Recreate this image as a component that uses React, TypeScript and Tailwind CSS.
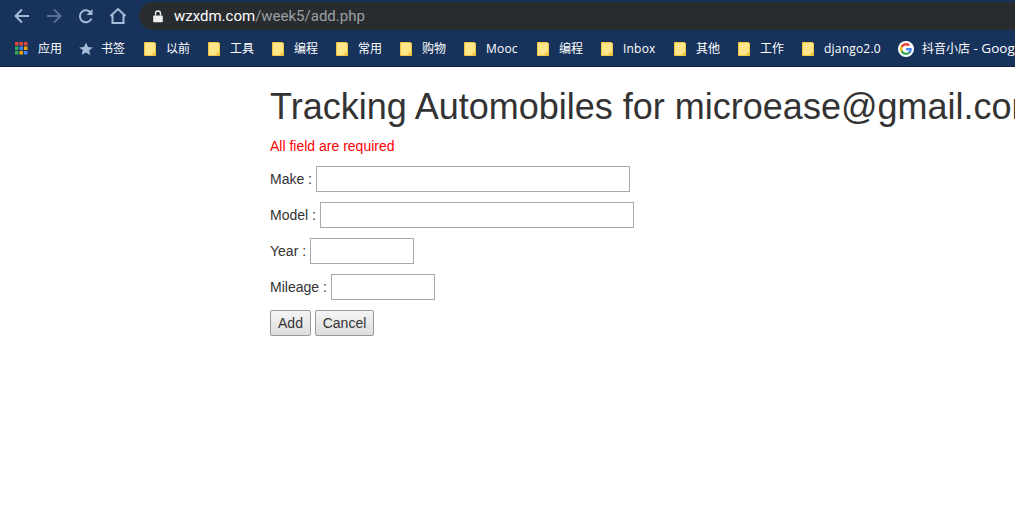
const folders = [
  ["以前", 64], ["工具", 64], ["编程", 64], ["常用", 64], ["购物", 64], ["Mooc", 73], ["编程", 64], ["Inbox", 73], ["其他", 64], ["工作", 64], ["django2.0", 96],
] as const;

const gridColors = ["#e0483e", "#e0483e", "#e0483e", "#34a853", "#4285f4", "#f4a400", "#34a853", "#f4a400", "#4285f4"];

function Folder() {
  return (
    <svg width="12" height="14" viewBox="0 0 12 14" className="shrink-0 ml-[1px]">
      <path d="M.5.5h10l1 1v12H.5z" fill="#ffe68a" stroke="#f2c63c" strokeWidth="1" />
      <path d="M8.500 13.500v-3h3v3z" fill="#f2c63c" />
    </svg>
  );
}

function Field({ label, width }: { label: string; width: string }) {
  return (
    <div className="flex items-center h-[26px] mb-[10px]">
      <span className="mr-1">{label}</span>
      <input className={`${width} h-[26px] border border-[#a9a9a9] bg-white`} />
    </div>
  );
}

export default function App() {
  return (
    <div className="w-[1015px] h-[529px] overflow-hidden bg-white font-['Liberation_Sans',sans-serif]">
      <div className="h-[32px] bg-[#17335c] flex items-center">
        <div className="w-[140px] pl-[13px] flex items-center gap-[14px] shrink-0">
          <svg width="18" height="18" viewBox="0 0 18 18" fill="none" stroke="#a6bbd8" strokeWidth="2"><path d="M16 9H3M9 2.500 2.500 9 9 15.500" /></svg>
          <svg width="18" height="18" viewBox="0 0 18 18" fill="none" stroke="#566f95" strokeWidth="2"><path d="M2 9h13M9 2.500 15.500 9 9 15.500" /></svg>
          <svg width="18" height="18" viewBox="0 0 18 18" fill="none" stroke="#a6bbd8" strokeWidth="2"><path d="M14.500 11.500a6 6 0 1 1-.6-5.500" /><path d="M15.500 2v6h-6z" fill="#a6bbd8" stroke="none" /></svg>
          <svg width="18" height="18" viewBox="0 0 18 18" fill="none" stroke="#a6bbd8" strokeWidth="2"><path d="M1.500 9 9 2l7.500 7M3.500 7.500V16h11V7.500" /></svg>
        </div>
        <div className="flex-1 h-[28px] -ml-[1px] bg-[#292c2f] rounded-l-[14px] flex items-center pl-[14px]">
          <svg width="10" height="13" viewBox="0 0 10 13" className="mr-[11px]"><path d="M1 5.500h8a.8.800 0 0 1 .8.800v5.200a.8.800 0 0 1-.8.800H1a.8.800 0 0 1-.8-.800V6.300a.8.800 0 0 1 .8-.800z" fill="#eeeeee" /><path d="M2.500 5.500V3.500a2.500 2.500 0 0 1 5 0v2" fill="none" stroke="#eeeeee" strokeWidth="1.300" /></svg>
          <span className="text-[15px] text-white font-['Roboto',sans-serif]">wzxdm.com<span className="text-[#9aa0a6]">/week5/add.php</span></span>
        </div>
      </div>
      <div className="h-[35px] pb-[1px] bg-[#17335c] border-b border-[#101f38] flex items-center pl-[15px] text-white text-[12px] font-['Open_Sans','Noto_Sans_CJK_SC',sans-serif] whitespace-nowrap overflow-hidden">
        <div className="w-[64px] flex items-center shrink-0 gap-[10px]">
          <svg width="13" height="13" viewBox="0 0 13 13" className="shrink-0">
            {gridColors.map((color, i) => (
              <rect key={i} x={(i % 3) * 4.500} y={Math.floor(i / 3) * 4.500} width="3.500" height="3.500" fill={color} />
            ))}
          </svg>
          <span>应用</span>
        </div>
        <div className="w-[64px] flex items-center shrink-0 gap-[8px]">
          <svg width="14" height="14" viewBox="0 0 14 14" className="shrink-0"><path d="m7 .5 2 4.400 4.800.5-3.600 3.200 1 4.700L7 10.400l-4.200 2.400 1-4.700L.2 5.400 5 4.900z" fill="#a6bbd8" /></svg>
          <span>书签</span>
        </div>
        {folders.map(([name, w], i) => (
          <div key={i} className="flex items-center shrink-0 gap-[10px]" style={{ width: w }}>
            <Folder />
            <span className={/[a-z]/i.test(name) ? "tracking-[0.2px]" : ""}>{name}</span>
          </div>
        ))}
        <div className="flex items-center shrink-0 gap-[8px] pl-[1px]">
          <span className="w-[16px] h-[16px] rounded-full bg-white flex items-center justify-center shrink-0">
            <svg width="12" height="12" viewBox="0 0 48 48">
              <path fill="#EA4335" d="M24 9.500c3.500 0 6.700 1.200 9.200 3.600l6.900-6.900C35.900 2.400 30.500 0 24 0 14.600 0 6.500 5.400 2.600 13.200l8 6.200C12.400 13.700 17.700 9.500 24 9.500z" />
              <path fill="#4285F4" d="M46.900 24.500c0-1.600-.1-3.100-.4-4.500H24v9h12.900c-.6 3-2.200 5.500-4.700 7.200l7.700 6c4.500-4.200 7-10.300 7-17.700z" />
              <path fill="#FBBC05" d="M10.500 28.600A14.500 14.500 0 0 1 10.500 19.400l-8-6.200a24 24 0 0 0 0 21.600z" />
              <path fill="#34A853" d="M24 48c6.500 0 11.900-2.100 15.900-5.800l-7.700-6c-2.200 1.400-4.900 2.300-8.200 2.300-6.300 0-11.600-4.200-13.500-9.900l-8 6.200C6.500 42.600 14.600 48 24 48z" />
            </svg>
          </span>
          <span>抖音小店<span className="text-[13.500px]"> - Google</span></span>
        </div>
      </div>
      <main className="pl-[270px] text-[14px] leading-[20px] text-[#333333]">
        <h1 className="text-[36px] leading-[40px] pt-[20px] mb-[9px] whitespace-nowrap">Tracking Automobiles for microease@gmail.com</h1>
        <p className="text-[#ff0000] mb-[10px]">All field are required</p>
        <form>
          <Field label="Make :" width="w-[314px]" />
          <Field label="Model :" width="w-[314px]" />
          <Field label="Year :" width="w-[104px]" />
          <Field label="Mileage :" width="w-[104px]" />
          <div className="flex gap-1">
            <button type="button" className="h-[26px] w-[41px] border border-[#999999] rounded-[2px] bg-gradient-to-b from-[#f5f5f5] to-[#dddddd]">Add</button>
            <button type="button" className="h-[26px] w-[59px] border border-[#999999] rounded-[2px] bg-gradient-to-b from-[#f5f5f5] to-[#dddddd]">Cancel</button>
          </div>
        </form>
      </main>
    </div>
  );
}
